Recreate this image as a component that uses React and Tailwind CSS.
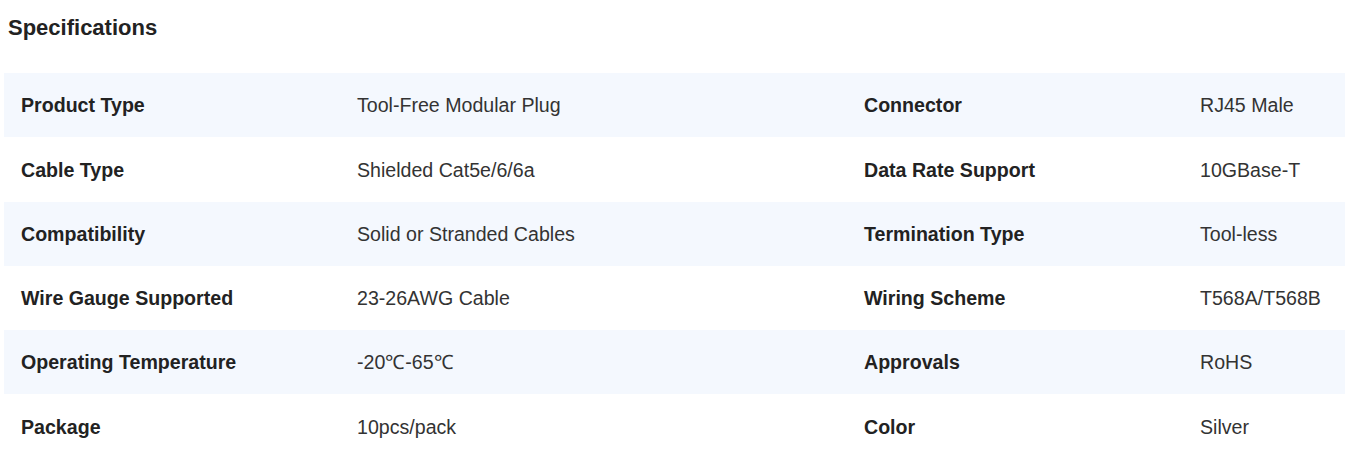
const specs = [
  ["Product Type", "Tool-Free Modular Plug", "Connector", "RJ45 Male"],
  ["Cable Type", "Shielded Cat5e/6/6a", "Data Rate Support", "10GBase-T"],
  ["Compatibility", "Solid or Stranded Cables", "Termination Type", "Tool-less"],
  ["Wire Gauge Supported", "23-26AWG Cable", "Wiring Scheme", "T568A/T568B"],
  ["Operating Temperature", "-20\u2103-65\u2103", "Approvals", "RoHS"],
  ["Package", "10pcs/pack", "Color", "Silver"],
];

export default function App() {
  return (
    <div className="bg-white min-h-screen font-['Liberation_Sans',Arial,sans-serif]">
      <h2 className="pl-2 pt-[15px] h-[73px] text-[22px] leading-[26px] font-bold text-[#222]">
        Specifications
      </h2>
      <div className="ml-1 w-[1400px]">
        {specs.map((row, i) => (
          <div
            key={i}
            className={
              "grid grid-cols-[336px_507px_336px_1fr] h-[64.25px] pt-[2px] items-center text-[19.6px] " +
              (i % 2 === 0 ? "bg-[#f4f8fe]" : "bg-white")
            }
          >
            <div className="px-[17px] font-bold text-[#222]">{row[0]}</div>
            <div className="px-[17px] text-[#333]">{row[1]}</div>
            <div className="px-[17px] font-bold text-[#222]">{row[2]}</div>
            <div className="px-[17px] text-[#333]">{row[3]}</div>
          </div>
        ))}
      </div>
    </div>
  );
}
